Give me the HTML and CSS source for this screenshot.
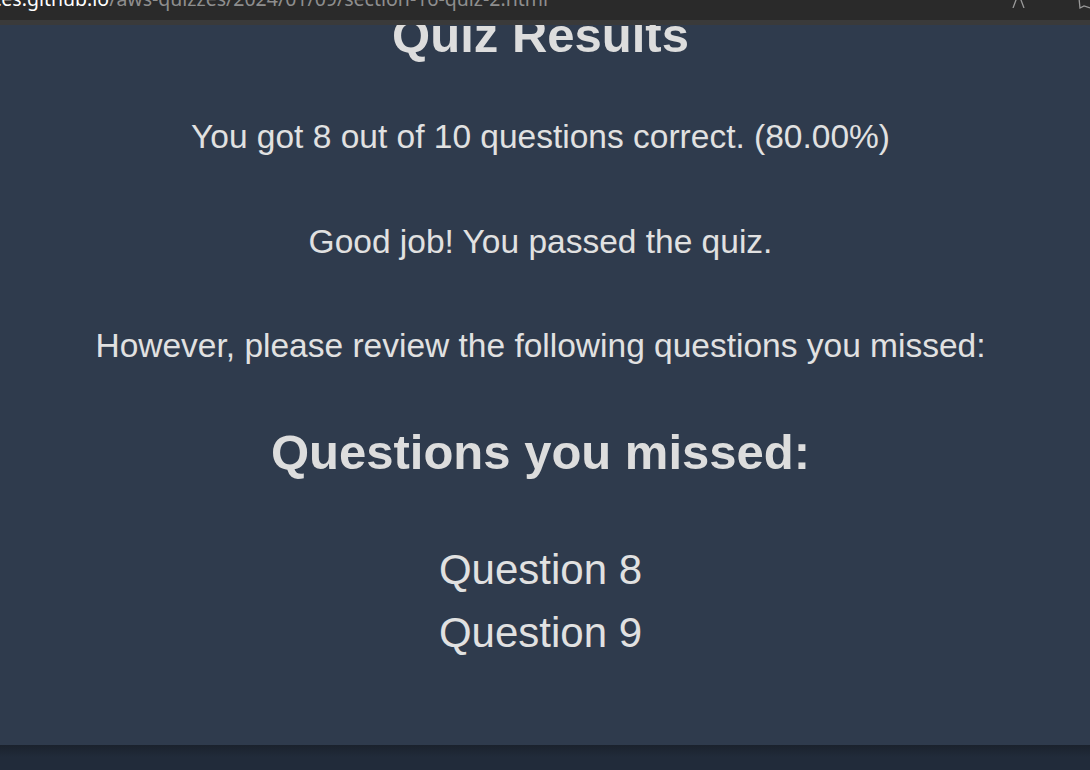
FILE: index.html
```html
<!DOCTYPE html>
<html lang="en">
<head>
<meta charset="utf-8">
<title>Quiz Results</title>
<link rel="stylesheet" href="styles.css">
</head>
<body>
<header class="chrome">
  <div class="urlbar">
    <span class="url"><span class="host">ces.github.io</span><span class="path">/aws-quizzes/2024/01/09/section-16-quiz-2.html</span></span>
    <span class="tools">
      <svg class="ico-a" width="16" height="8" viewBox="0 0 16 8"><path d="M2 8 L6.5 -4 L8.5 -4 L13 8" fill="none" stroke="#9a9a9a" stroke-width="1.3"/></svg>
      <svg class="ico-b" width="12" height="10" viewBox="0 0 12 10"><path d="M1 -2 L2 8 L6 6 L12 8" fill="none" stroke="#9a9a9a" stroke-width="1.3"/></svg>
    </span>
  </div>
  <div class="strip"></div>
</header>
<main class="page">
  <section class="results">
    <h1 class="title">Quiz Results</h1>
    <p class="line first">You got 8 out of 10 questions correct. (80.00%)</p>
    <p class="line">Good job! You passed the quiz.</p>
    <p class="line">However, please review the following questions you missed:</p>
    <h2 class="title missed">Questions you missed:</h2>
    <ul class="missed-list">
      <li>Question 8</li>
      <li>Question 9</li>
    </ul>
  </section>
</main>
<footer class="below"></footer>
</body>
</html>
```
FILE: styles.css
```css
* { box-sizing: border-box; }
html, body { margin: 0; padding: 0; }
body {
  width: 1090px;
  height: 770px;
  overflow: hidden;
  background: #212b3a;
  font-family: "Liberation Sans", Arial, sans-serif;
  display: flex;
  flex-direction: column;
}
.chrome {
  flex: 0 0 25px;
  display: flex;
  flex-direction: column;
  background: #2a2a2a;
}
.urlbar {
  height: 20px;
  overflow: hidden;
  display: flex;
  justify-content: space-between;
  align-items: flex-start;
}
.url {
  font-family: "Noto Sans", "Open Sans", sans-serif;
  font-size: 19.5px;
  line-height: 20px;
  margin-top: -11px;
  margin-left: -8px;
  white-space: nowrap;
}
.host { color: #ffffff; }
.path { color: #8e8e8e; }
.tools {
  display: flex;
  align-items: flex-start;
  gap: 51px;
}
.ico-a { display: block; }
.ico-b { display: block; }
.strip {
  height: 5px;
  background: #3a3a3a;
}
.page {
  flex: 0 0 720px;
  background: #2f3b4d;
  overflow: hidden;
  padding-right: 9px;
}
.results {
  display: flex;
  flex-direction: column;
  align-items: center;
  text-align: center;
  color: #e1e1e1;
}
.title {
  margin: 0;
  font-size: 49px;
  font-weight: bold;
  line-height: 1.15;
  color: #dddddd;
}
.results > .title:first-child { margin-top: -18px; }
.line {
  margin: 66px 0 0;
  font-size: 33.5px;
  line-height: 1.15;
}
.line.first { margin-top: 55px; }
.missed { margin-top: 58px; }
.missed-list {
  list-style: none;
  margin: 58px 0 0;
  padding: 0;
  font-size: 42px;
  line-height: 63px;
}
.below {
  flex: 1;
  background: linear-gradient(#1b222d, #212b3a 12px);
}
```
